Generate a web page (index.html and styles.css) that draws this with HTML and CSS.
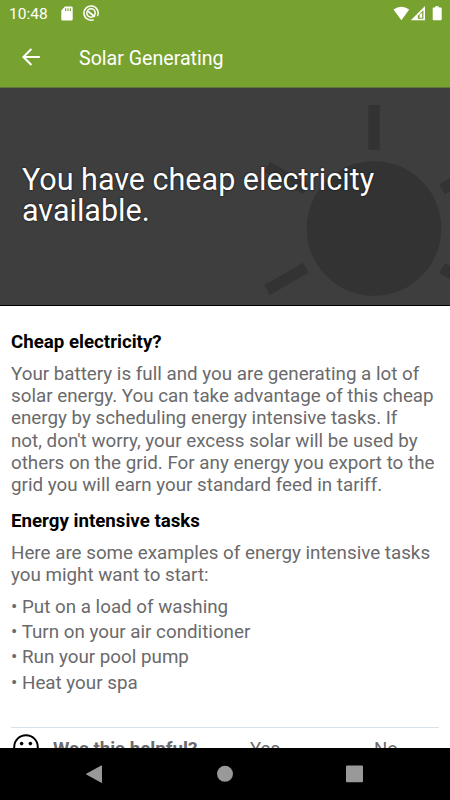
FILE: index.html
```html
<!DOCTYPE html>
<html lang="en">
<head>
  <meta charset="UTF-8">
  <meta name="viewport" content="width=device-width, initial-scale=1.0">
  <title>Solar Generating</title>
  <link rel="stylesheet" href="styles.css">
</head>
<body>

<div class="screen">
  <!-- status bar -->
  <div class="status-bar">
    <span class="time">10:48</span>
    <svg class="sd-icon" width="12" height="15" viewBox="0 0 12 15">
      <path fill="#fff" d="M4 0.5h6.5a1.2 1.2 0 0 1 1.2 1.2v11.6a1.2 1.2 0 0 1-1.2 1.2h-9a1.2 1.2 0 0 1-1.2-1.2V4.5z"/>
      <path stroke="#78a22f" stroke-width="1.1" d="M4.6 2.2v2.8M7 2.2v2.8M9.4 2.2v2.8"/>
    </svg>
    <svg class="sync-icon" width="16" height="16" viewBox="0 0 16 16" fill="none" stroke="#fff">
      <path stroke-width="1.5" d="M10.8 14.6A7.1 7.1 0 1 1 14.4 11.2"/>
      <circle cx="8" cy="8" r="4.2" stroke-width="1.5"/>
      <path stroke-width="1.8" d="M5.2 6.4l6.6 5.4"/>
    </svg>
    <svg class="signal-icons" width="50" height="16" viewBox="0 0 50 16" fill="#fff">
      <path d="M0.5 3.6Q8.3-2.2 16.2 3.6L8.4 14.2z"/>
      <path fill-rule="evenodd" d="M32 0v14.2H17.8zM30.4 4.2l-5.6 5.6v3h5.6z"/>
      <path d="M26.6 8.4l2.6-1.6v5h-2.6z"/>
      <path d="M42.2 0.2h3.5v1.3h2.1a.9.9 0 0 1 .9.9v10.9a.9.9 0 0 1-.9.9h-7.2a.9.9 0 0 1-.9-.9V2.4a.9.9 0 0 1 .9-.9h1.6z"/>
    </svg>
  </div>

  <!-- app bar -->
  <div class="app-bar">
    <svg class="back-icon" width="18" height="18" viewBox="0 0 18 18" fill="none" stroke="#fff" stroke-width="2">
      <path d="M17.8 9H1.8M9.4 1L1.4 9l8 8"/>
    </svg>
    <span class="app-title">Solar Generating</span>
  </div>

  <!-- banner -->
  <div class="banner">
    <svg class="sun" width="450" height="217" viewBox="0 88 450 217" fill="#333">
      <circle cx="374" cy="228.5" r="67.3"/>
      <rect x="368.4" y="105" width="11.4" height="45"/>
      <rect x="368.4" y="105" width="11.4" height="45" transform="rotate(60 374 228.5)"/>
      <rect x="368.4" y="105" width="11.4" height="45" transform="rotate(120 374 228.5)"/>
      <rect x="368.4" y="105" width="11.4" height="45" transform="rotate(240 374 228.5)"/>
      <rect x="368.4" y="105" width="11.4" height="45" transform="rotate(300 374 228.5)"/>
    </svg>
    <h1>You have cheap electricity<br>available.</h1>
  </div>

  <!-- content -->
  <div class="content">
    <h2>Cheap electricity?</h2>
    <p>Your battery is full and you are generating a lot of<br>
      solar energy. You can take advantage of this cheap<br>
      energy by scheduling energy intensive tasks. If<br>
      not, don't worry, your excess solar will be used by<br>
      others on the grid. For any energy you export to the<br>
      grid you will earn your standard feed in tariff.</p>
    <h2>Energy intensive tasks</h2>
    <p>Here are some examples of energy intensive tasks<br>
      you might want to start:</p>
    <ul>
      <li>• Put on a load of washing</li>
      <li>• Turn on your air conditioner</li>
      <li>• Run your pool pump</li>
      <li>• Heat your spa</li>
    </ul>
    <div class="feedback">
      <svg class="face" width="26" height="26" viewBox="0 0 26 26">
        <circle cx="13" cy="13" r="11.8" fill="none" stroke="#000" stroke-width="2"/>
        <circle cx="8.6" cy="9.6" r="1.8"/>
        <circle cx="17.4" cy="9.6" r="1.8"/>
        <path d="M7 16q6 6 12 0" fill="none" stroke="#000" stroke-width="2"/>
      </svg>
      <span class="feedback-label">Was this helpful?</span>
      <span class="answer">Yes</span>
      <span class="answer">No</span>
    </div>
  </div>

  <!-- navigation bar -->
  <div class="nav-bar">
    <svg width="450" height="52" viewBox="0 0 450 52" fill="#999">
      <path d="M101.2 17.6q.8-.4.8.5v16.2q0 .9-.8.5L86.3 26.6q-.6-.4 0-.8z"/>
      <circle cx="225" cy="25.8" r="8"/>
      <rect x="346" y="17.5" width="17" height="16.8" rx="1"/>
    </svg>
  </div>
</div>

</body>
</html>
```
FILE: styles.css
```css
* {
  box-sizing: border-box;
}

body {
  margin: 0;
  font-family: Roboto, "Liberation Sans", sans-serif;
  background-color: #fff;
}

h1, h2, p, ul {
  margin: 0;
  padding: 0;
  font-weight: normal;
}

.screen {
  display: flex;
  flex-direction: column;
  width: 450px;
  height: 800px;
  overflow: hidden;
}

/* status bar */
.status-bar {
  display: flex;
  flex: none;
  height: 27px;
  padding: 0 7px 0 9px;
  background-color: #78a22f;
  color: #fff;
}

.time {
  width: 52px;
  font-size: 15.5px;
  line-height: 28px;
}

.sd-icon {
  margin-top: 5.5px;
}

.sync-icon {
  margin: 5px 0 0 10px;
}

.signal-icons {
  margin: 6px 0 0 auto;
}

/* app bar */
.app-bar {
  display: flex;
  flex: none;
  align-items: center;
  height: 61px;
  padding-left: 22px;
  background-color: #78a22f;
  border-bottom: 1px solid #5f753a;
  color: #fff;
}

.app-title {
  margin-left: 39px;
  padding-top: 2px;
  font-size: 19.6px;
}

/* banner */
.banner {
  position: relative;
  flex: none;
  height: 218px;
  padding: 76px 22px 0;
  background-color: #3e3e3e;
  border-bottom: 1px solid #000;
  color: #fff;
}

.sun {
  position: absolute;
  top: 0;
  left: 0;
}

.banner h1 {
  position: relative;
  font-size: 30.5px;
  line-height: 31px;
  white-space: nowrap;
  text-shadow: 0 0 2px #000;
}

/* content */
.content {
  flex: 1;
  min-height: 0;
  padding: 24px 11px 0;
  overflow: hidden;
  color: #6a6a6c;
}

.content h2 {
  height: 33px;
  font-size: 18.7px;
  line-height: 24px;
  font-weight: bold;
  color: #000;
}

.content p {
  margin-bottom: 13px;
  font-size: 18.8px;
  line-height: 22.2px;
  white-space: nowrap;
}

.content ul {
  margin-top: -5px;
  list-style: none;
}

.content li {
  font-size: 18.8px;
  line-height: 25.3px;
}

/* feedback row */
.feedback {
  display: grid;
  grid-template-columns: 42px 152px 120px 1fr;
  margin-top: 31px;
  padding-top: 6px;
  border-top: 1px solid #d8e0e8;
  font-size: 18.6px;
  line-height: 22px;
}

.feedback span {
  padding-top: 4px;
}

.face {
  margin-left: 2px;
}

.feedback-label {
  font-weight: bold;
  font-size: 18.8px;
}

.answer {
  text-align: center;
}

.answer:last-child {
  padding-left: 8px;
}

/* navigation bar */
.nav-bar {
  flex: none;
  height: 52px;
  background-color: #000;
}
```
